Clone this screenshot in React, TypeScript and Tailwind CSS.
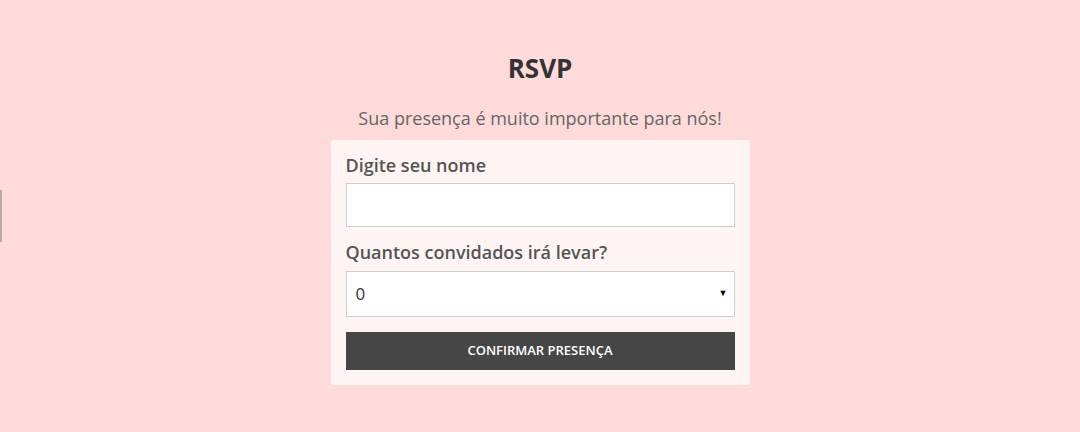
import React from 'react';

function App() {
  return (
    <div className="relative min-h-screen h-[432px] bg-[#ffdadb] font-['Open_Sans',sans-serif]">
      <div className="absolute left-0 top-[190px] h-[52px] w-[2px] bg-[#b9a9a9]"></div>
      <div className="flex flex-col items-center pt-[49px]">
        <h1 className="text-[26px] leading-[38px] font-bold text-[#333333]">RSVP</h1>
        <p className="mt-[18px] text-[18px] leading-[26px] text-[#666666]">
          Sua presença é muito importante para nós!
        </p>
        <form className="mt-[9px] w-[419px] rounded-[3px] bg-[#fff4f4] px-[15px] pt-[12px] pb-[15px]">
          <label className="block text-[18px] leading-[27px] font-semibold text-[#555555]">Digite seu nome</label>
          <input
            type="text"
            className="mt-[4px] block h-[44px] w-full border border-[#cccccc] bg-white px-3 outline-none"
          />
          <label className="mt-[12px] block text-[18px] leading-[27px] font-semibold text-[#555555]">
            Quantos convidados irá levar?
          </label>
          <div className="relative mt-[5px]">
            <select className="block h-[46px] w-full appearance-none border border-[#cccccc] bg-white pl-[9px] text-[17px] text-[#333333] outline-none">
              <option>0</option>
              <option>1</option>
              <option>2</option>
              <option>3</option>
            </select>
            <span className="pointer-events-none absolute right-[7px] top-[15px] text-[9px] text-black">▼</span>
          </div>
          <button
            type="button"
            className="mt-[15px] block h-[38px] w-full bg-[#464646] text-[13px] font-semibold uppercase text-white"
          >
            Confirmar presença
          </button>
        </form>
      </div>
    </div>
  );
}

export default App;
